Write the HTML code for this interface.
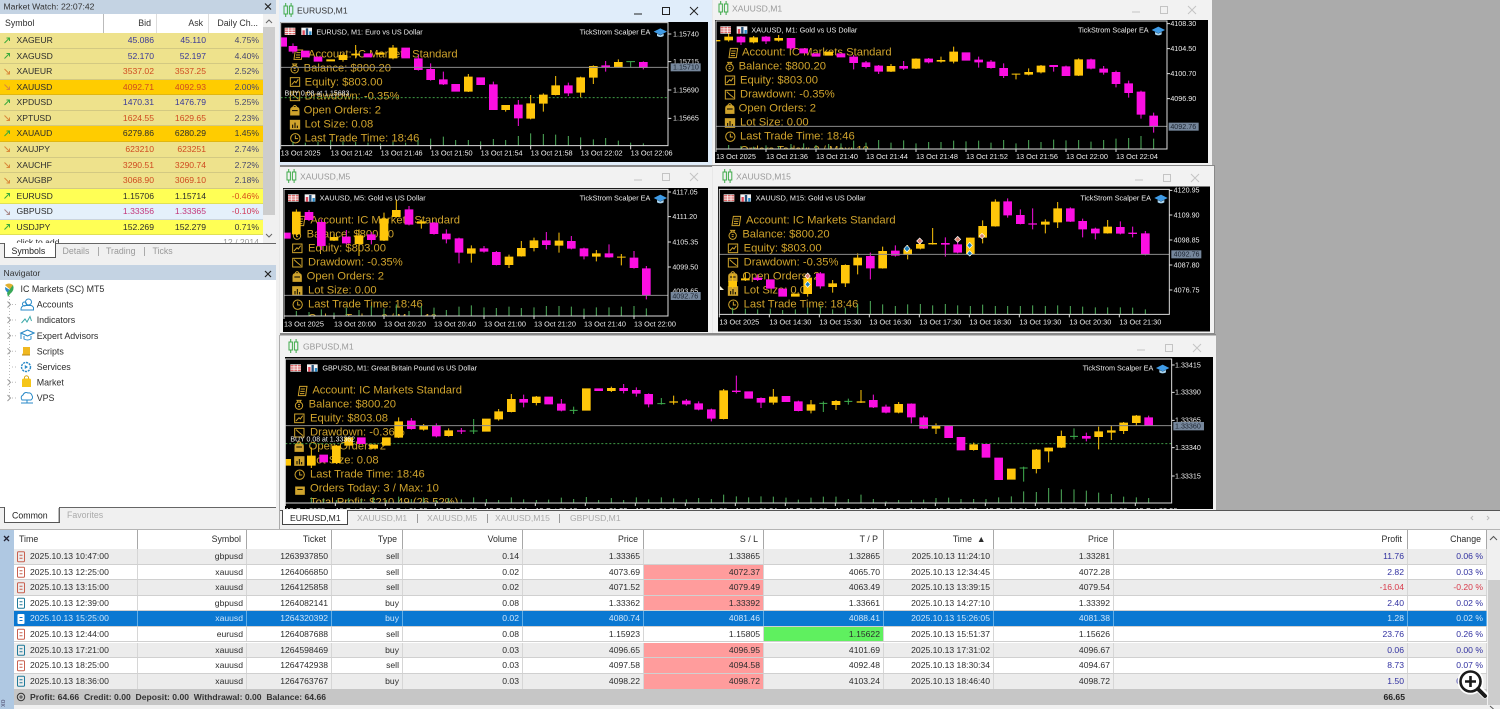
<!DOCTYPE html>
<html><head><meta charset="utf-8"><title>MT5</title>
<style>
html,body{margin:0;padding:0;width:1500px;height:709px;overflow:hidden;background:#ababab;font-family:"Liberation Sans",sans-serif}
svg{position:absolute;left:0;top:0}
.p{position:absolute}
.mb{stroke-width:26;fill:none;stroke:#fb0fe2}.mw{stroke-width:3;fill:none;stroke:#fb0fe2}
.yb{stroke-width:26;fill:none;stroke:#ffc60a}.yw{stroke-width:3;fill:none;stroke:#ffc60a}
.gw{stroke-width:3;fill:none;stroke:#3fb04f}
.v{stroke-width:3;fill:none;stroke:#4fae5b}
.fr{fill:none;stroke:#dcdcdc;stroke-width:3}
.tk{fill:none;stroke:#ddd;stroke-width:3}
.pl{stroke:#8a8a8a;stroke-width:3;fill:none}
.dl{stroke:#3f9a46;stroke-width:3;stroke-dasharray:6 6;fill:none}
.ax{font:22px "Liberation Sans",sans-serif;fill:#eee}
.pr{font:21.5px "Liberation Sans",sans-serif;fill:#eee}
.tl{font:21.8px "Liberation Sans",sans-serif;fill:#eee}
.hd{font:33.7px "Liberation Sans",sans-serif;fill:#cfa32c}
.ttl{font:8.6px "Liberation Sans",sans-serif}
.mw2{position:absolute;left:0;top:14px;width:263px}
.r{display:grid;grid-template-columns:104px 53px 52px 54px;height:15.57px;line-height:15px;font-size:8.6px;color:#2c2c2c;box-sizing:border-box;border-bottom:1px solid rgba(90,90,90,.18)}
.r span{text-align:right;padding-right:3px;white-space:nowrap;overflow:hidden}
.r span:first-child{text-align:left;padding-left:16.5px;color:#2c2c2c}
.k{background:#eee28c}.o{background:#ffcc00}.l{background:#ffff55}.b{background:#e4f0fb}
.up span{color:#38389a}.dn span{color:#cf4a20}
.r span:last-child{color:#48486e;padding-right:4px}
.dk span{color:#2c2c2c}.dk span:last-child{color:#3a3a3a}
.t{position:absolute;left:14px;display:grid;grid-template-columns:124px 109px 85px 71px 120px 121px 120px 120px 110px 120px 294px 79px;width:1473px;font-size:8.6px;color:#2c2c2c;box-sizing:border-box;height:15.58px;line-height:15px;border-bottom:1px solid #d0d0d0}
.t span{text-align:right;padding-right:3px;border-right:1px solid #d6d6d6;white-space:nowrap;overflow:hidden}
.t span:first-child{text-align:left;padding-left:16px}
.t.h{height:20px;line-height:19px;background:#fff;border:0;font-size:8.8px}
.t.h span{border-right:1px solid #a8a8a8;padding-right:5px}
.t.h span:first-child{padding-left:5px}
.e{background:#ececec}.w{background:#fff}
.s{background:#0a78d2;color:#d0e6fa}.s span{border-right-color:#63aee6}
.sl{background:#ff9c9c}.tp{background:#5ff05f}
.pf{color:#3030a0}.ls{color:#d83a4a}
</style></head><body>

<svg width="1500" height="709" viewBox="0 0 1500 709">
<defs>
<g id="hud" fill="none" stroke="#cfa32c" stroke-width="3">
<path d="M52 150H74L70 178H48ZM55 158H68M54 165H67M53 172H66"/>
<circle cx="50" cy="208" r="11"/><path d="M44 192H56L53 197H47Z"/><path d="M47 205H53M47 211H53"/>
<rect x="37" y="233" width="28" height="26"/><path d="M41 254L50 244L54 248L61 238"/>
<rect x="37" y="276" width="28" height="26"/><path d="M41 280L52 290L62 298"/>
<path d="M44 322Q50 310 57 322" /><path fill="#cfa32c" d="M38 345V330Q38 322 46 322H55Q63 322 63 330V345Z"/><path stroke="#000" d="M42 332H59"/>
<rect x="37" y="361" width="28" height="26" fill="#cfa32c"/><path stroke="#000" d="M44 384V374M51 384V368M58 384V377"/>
<circle cx="52" cy="415" r="14"/><path d="M52 406V416H60"/>
<rect x="40" y="452" width="26" height="22" fill="#cfa32c"/><path stroke="#000" d="M45 459H61"/>
</g>
<g id="ti"><rect width="32" height="22" fill="#f3f3f3"/><path d="M0 4H32M0 11H32M0 18H32" stroke="#e06a6a" stroke-width="4"/><path d="M11 0V22M22 0V22" stroke="#fff" stroke-width="2"/></g>
<g id="ci"><rect width="32" height="22" fill="#f5f5f5"/><path d="M7 22V8" stroke="#e04a5a" stroke-width="7"/><path d="M17 22V2" stroke="#24507a" stroke-width="7"/><path d="M27 22V11" stroke="#2a8ac8" stroke-width="7"/></g>
<g id="hat"><path d="M-20 0L0-10L20 0L0 10Z" fill="#3f9be6"/><path d="M-10 6V13Q0 19 10 13V6L0 11Z" fill="#a8d4f0"/></g>
<g id="wi" fill="none"><rect x="-4" y="-4" width="3.4" height="8"/><rect x="1.4" y="-4" width="3.4" height="8"/><path d="M-2.3 -7V-4M-2.3 4V7M3.1 -7V-4M3.1 4V7"/></g>
<clipPath id="c1"><rect x="8" y="68" width="1162" height="369"/></clipPath>
<clipPath id="c2"><rect x="12" y="63" width="1353" height="384"/></clipPath>
<clipPath id="c3"><rect x="18" y="70" width="1152" height="380"/></clipPath>
<clipPath id="c4"><rect x="22" y="70" width="1350" height="375"/></clipPath>
<clipPath id="c5"><rect x="22" y="75" width="2659" height="432"/></clipPath>
</defs>

<rect x="279" y="0" width="436" height="335" fill="#e8e8e8"/>
<path d="M280 165.5H714M280 334.5H1216" stroke="#888"/>

<!-- EURUSD M1 -->
<rect x="279" y="0" width="433" height="165" fill="#e0edfa"/>
<rect x="280" y="22" width="428" height="140" fill="#000"/>
<g transform="translate(278,0) scale(.33333)">
<g clip-path="url(#c1)">
<use href="#hud"/>
<text class="hd" x="90" y="172">Account: IC Markets Standard</text>
<text class="hd" x="77" y="214">Balance: $800.20</text>
<text class="hd" x="80" y="256">Equity: $803.00</text>
<text class="hd" x="80" y="298">Drawdown: -0.35%</text>
<text class="hd" x="77" y="340">Open Orders: 2</text>
<text class="hd" x="80" y="382">Lot Size: 0.08</text>
<text class="hd" x="80" y="424">Last Trade Time: 18:46</text>
<path class="dl" d="M8 293H1170"/>
<path class="v" d="M45 437V425M82 437V428M120 437V425M158 437V420M195 437V424M233 437V426M270 437V428M307 437V430M345 437V426M383 437V428M420 437V420M458 437V416M496 437V410M533 437V420M571 437V420M608 437V424M646 437V417M683 437V420M721 437V408M758 437V400M796 437V402M833 437V404M871 437V408M908 437V412M946 437V418M983 437V414M1021 437V422M1058 437V428M1096 437V430"/>
<path class="mw" d="M45 130V160M421 165V212M458 190V242M496 215V255M646 245V330M721 300V378M871 248V288M983 183V215M1096 184V208"/>
<path class="mb" d="M14 112V140M45 138V155M82 152V172M120 170V185M270 160V172M383 143V175M421 175V210M458 207V240M496 238V253M533 252V275M608 232V255M646 253V330M721 314V355M871 256V280M983 196V203M1096 186V204"/>
<path class="yw" d="M195 160V185M233 135V175M345 135V178M571 222V276M683 315V335M758 285V358M796 280V335M833 228V286M908 230V292M946 196V252M1021 178V203"/>
<path class="yb" d="M158 178V184M195 165V180M233 161V166M307 158V164M345 143V175M571 230V275M683 315V330M758 310V356M796 284V311M833 256V285M908 232V278M946 198V233M1021 186V202"/>
<path class="gw" d="M1058 184V203M1045 185H1071"/>
<path class="pl" d="M8 202H1170"/>
<text x="20" y="287" style="font:21px 'Liberation Sans',sans-serif;fill:#eee">BUY 0.08 at 1.15683</text>
</g>
<path class="fr" d="M8 68V437H1170V68Z"/>
<path class="tk" d="M8 437V448M158 437V448M308 437V448M458 437V448M608 437V448M758 437V448M908 437V448M1058 437V448M1170 102H1180M1170 185H1180M1170 270H1180M1170 355H1180"/>
<use href="#ti" x="20" y="83"/><use href="#ci" x="70" y="83"/>
<text class="tl" x="115" y="103">EURUSD, M1:  Euro vs US Dollar</text>
<text class="tl" x="905" y="103">TickStrom Scalper EA</text><use href="#hat" x="1147" y="95"/>
<text class="pr" x="1185" y="109">1.15740</text><text class="pr" x="1185" y="192">1.15715</text><text class="pr" x="1185" y="277">1.15690</text><text class="pr" x="1185" y="362">1.15665</text>
<rect x="1178" y="190" width="90" height="24" fill="#76879c"/><text class="pr" x="1185" y="209" style="fill:#1c2430">1.15710</text>
<text class="ax" x="8" y="467">13 Oct 2025</text><text class="ax" x="158" y="467">13 Oct 21:42</text><text class="ax" x="308" y="467">13 Oct 21:46</text><text class="ax" x="458" y="467">13 Oct 21:50</text><text class="ax" x="608" y="467">13 Oct 21:54</text><text class="ax" x="758" y="467">13 Oct 21:58</text><text class="ax" x="908" y="467">13 Oct 22:02</text><text class="ax" x="1058" y="467">13 Oct 22:06</text>
</g>

<!-- XAUUSD M1 -->
<rect x="713" y="0" width="499" height="165" fill="#f2f2f2"/>
<rect x="715" y="20" width="493" height="143" fill="#000"/>
<g transform="translate(712,0) scale(.33333)">
<g clip-path="url(#c2)">
<g transform="translate(3,-5)">
<use href="#hud"/>
<text class="hd" x="87" y="172">Account: IC Markets Standard</text>
<text class="hd" x="77" y="214">Balance: $800.20</text>
<text class="hd" x="81" y="256">Equity: $803.00</text>
<text class="hd" x="81" y="298">Drawdown: -0.35%</text>
<text class="hd" x="77" y="340">Open Orders: 2</text>
<text class="hd" x="81" y="382">Lot Size: 0.00</text>
<text class="hd" x="81" y="424">Last Trade Time: 18:46</text>
<text class="hd" x="81" y="466">Orders Today: 3 / Max: 10</text>
</g>
<path class="v" d="M50 447V435M87 447V438M125 447V440M162 447V436M200 447V438M237 447V432M275 447V430M312 447V435M350 447V432M387 447V430M425 447V422M462 447V428M500 447V420M537 447V428M575 447V421M612 447V430M650 447V426M687 447V426M725 447V422M762 447V424M800 447V422M837 447V428M875 447V420M912 447V430M950 447V420M987 447V426M1025 447V419M1062 447V421M1100 447V420M1137 447V425M1175 447V420M1212 447V416M1250 447V414M1287 447V408M1325 447V416"/>
<path class="mw" d="M87 108V135M162 108V132M237 114V150M425 165V208M462 183V205M500 195V222M575 183V210M650 174V190M800 170V203M837 180V206M875 190V234M1025 195V215M1062 197V228M1137 176V208M1175 198V224M1212 212V262M1250 242V293M1287 272V356M1325 338V398"/>
<path class="mb" d="M87 110V127M162 110V124M237 114V145M275 145V160M312 160V170M387 160V172M425 170V189M462 187V201M500 197V215M575 198V206M650 176V187M762 157V182M800 179V187M837 185V204M875 204V228M1025 195V201M1062 199V228M1137 178V206M1175 206V218M1212 216V252M1250 250V279M1287 275V344M1325 347V381"/>
<path class="yw" d="M50 100V125M125 108V130M200 105V125M537 192V216M612 175V207M687 170V188M725 140V190M912 221V238M950 205V226M987 195V220M1100 175V228"/>
<path class="yb" d="M12 120V124M50 110V121M125 112V127M200 114V122M350 155V167M537 198V215M612 176V206M687 180V185M725 155V185M912 221V224M950 216V224M987 197V217M1100 178V227"/>
<path class="pl" d="M12 379H1365"/>
</g>
<path class="fr" d="M12 63V447H1365V63Z"/>
<path class="tk" d="M12 447V456M162 447V456M312 447V456M462 447V456M612 447V456M762 447V456M912 447V456M1062 447V456M1212 447V456M1365 71H1374M1365 146H1374M1365 221H1374M1365 296H1374"/>
<use href="#ti" x="25" y="79"/><use href="#ci" x="74" y="79"/>
<text class="tl" x="118" y="98">XAUUSD, M1:  Gold vs US Dollar</text>
<text class="tl" x="1098" y="98">TickStrom Scalper EA</text><use href="#hat" x="1339" y="90"/>
<text class="pr" x="1375" y="78">4108.30</text><text class="pr" x="1375" y="153">4104.50</text><text class="pr" x="1375" y="228">4100.70</text><text class="pr" x="1375" y="303">4096.90</text>
<rect x="1370" y="368" width="90" height="24" fill="#76879c"/><text class="pr" x="1375" y="387" style="fill:#1c2430">4092.76</text>
<text class="ax" x="12" y="477">13 Oct 2025</text><text class="ax" x="162" y="477">13 Oct 21:36</text><text class="ax" x="312" y="477">13 Oct 21:40</text><text class="ax" x="462" y="477">13 Oct 21:44</text><text class="ax" x="612" y="477">13 Oct 21:48</text><text class="ax" x="762" y="477">13 Oct 21:52</text><text class="ax" x="912" y="477">13 Oct 21:56</text><text class="ax" x="1062" y="477">13 Oct 22:00</text><text class="ax" x="1212" y="477">13 Oct 22:04</text>
</g>

<!-- XAUUSD M5 -->
<rect x="280" y="166" width="432" height="168" fill="#f2f2f2"/>
<rect x="283" y="188" width="425" height="144" fill="#000"/>
<g transform="translate(278,166) scale(.33333)">
<g clip-path="url(#c3)">
<g transform="translate(7,1)">
<use href="#hud"/>
<text class="hd" x="90" y="172">Account: IC Markets Standard</text>
<text class="hd" x="79" y="214">Balance: $800.20</text>
<text class="hd" x="83" y="256">Equity: $803.00</text>
<text class="hd" x="83" y="298">Drawdown: -0.35%</text>
<text class="hd" x="79" y="340">Open Orders: 2</text>
<text class="hd" x="83" y="382">Lot Size: 0.00</text>
<text class="hd" x="83" y="424">Last Trade Time: 18:46</text>
<text class="hd" x="83" y="466">Orders Today: 3 / Max: 10</text>
</g>
<path class="v" d="M55 450V435M93 450V438M130 450V430M168 450V440M205 450V425M243 450V432M280 450V420M318 450V428M355 450V415M393 450V435M430 450V420M468 450V425M505 450V432M543 450V422M580 450V418M618 450V424M655 450V426M693 450V422M730 450V426M768 450V424M805 450V420M843 450V420M880 450V422M918 450V428M955 450V424M993 450V424M1030 450V422M1068 450V420M1105 450V427"/>
<path class="mw" d="M93 132V165M130 160V252M205 192V235M280 198V235M393 120V178M468 168V206M505 190V232M543 215V292M618 240V260M655 255V298M805 198V250M880 210V250M918 245V280M993 235V275M1068 255V308M1105 300V400"/>
<path class="mb" d="M25 200V218M93 138V162M130 168V240M205 212V232M280 205V222M393 130V176M468 170V204M505 203V220M543 217V260M618 247V257M655 258V297M805 223V237M880 225V248M918 247V271M993 262V274M1068 275V306M1105 307V388"/>
<path class="yw" d="M55 130V210M168 205V225M243 190V270M318 140V225M355 100V155M430 160V188M580 238V290M693 266V306M730 225V272M768 215V256M843 200V260M955 252V286M1030 264V298"/>
<path class="yb" d="M55 137V205M168 213V224M243 208V234M318 158V224M355 132V153M430 166V173M580 247V263M693 272V297M730 246V271M768 223V246M843 224V239M955 262V272M1030 272V275"/>
<path class="pl" d="M18 388H1170"/>
</g>
<path class="fr" d="M18 70V450H1170V70Z"/>
<path class="tk" d="M18 450V459M168 450V459M318 450V459M468 450V459M618 450V459M768 450V459M918 450V459M1068 450V459M1170 78H1179M1170 152H1179M1170 228H1179M1170 303H1179"/>
<use href="#ti" x="30" y="85"/><use href="#ci" x="80" y="85"/>
<text class="tl" x="125" y="104">XAUUSD, M5:  Gold vs US Dollar</text>
<text class="tl" x="905" y="104">TickStrom Scalper EA</text><use href="#hat" x="1147" y="96"/>
<text class="pr" x="1183" y="85">4117.05</text><text class="pr" x="1183" y="159">4111.20</text><text class="pr" x="1183" y="235">4105.35</text><text class="pr" x="1183" y="310">4099.50</text><text class="pr" x="1183" y="382">4093.65</text>
<rect x="1178" y="378" width="90" height="24" fill="#76879c"/><text class="pr" x="1183" y="397" style="fill:#1c2430">4092.76</text>
<text class="ax" x="18" y="481">13 Oct 2025</text><text class="ax" x="168" y="481">13 Oct 20:00</text><text class="ax" x="318" y="481">13 Oct 20:20</text><text class="ax" x="468" y="481">13 Oct 20:40</text><text class="ax" x="618" y="481">13 Oct 21:00</text><text class="ax" x="768" y="481">13 Oct 21:20</text><text class="ax" x="918" y="481">13 Oct 21:40</text><text class="ax" x="1068" y="481">13 Oct 22:00</text>
</g>

<!-- XAUUSD M15 -->
<rect x="713" y="165" width="501" height="169" fill="#f2f2f2"/>
<rect x="718" y="186.5" width="492" height="145" fill="#000"/>
<g transform="translate(712,166) scale(.33333)">
<g clip-path="url(#c4)">
<g transform="translate(12,1)">
<use href="#hud"/>
<text class="hd" x="90" y="172">Account: IC Markets Standard</text>
<text class="hd" x="79" y="214">Balance: $800.20</text>
<text class="hd" x="83" y="256">Equity: $803.00</text>
<text class="hd" x="83" y="298">Drawdown: -0.35%</text>
<text class="hd" x="79" y="340">Open Orders: 2</text>
<text class="hd" x="83" y="382">Lot Size: 0.00</text>
<text class="hd" x="83" y="424">Last Trade Time: 18:46</text>
</g>
<path class="v" d="M62 445V425M100 445V428M137 445V430M175 445V428M212 445V432M250 445V430M287 445V425M325 445V420M362 445V430M400 445V425M437 445V415M475 445V405M512 445V415M550 445V420M587 445V415M625 445V414M662 445V418M700 445V414M737 445V418M775 445V420M812 445V416M850 445V420M887 445V420M925 445V420M962 445V418M1000 445V420M1037 445V418M1075 445V420M1112 445V422M1150 445V424M1187 445V424M1225 445V424M1262 445V425M1300 445V430"/>
<path class="mw" d="M137 325V345M325 318V368M475 260V340M550 238V272M700 214V272M737 225V262M887 97V155M925 130V175M962 127V190M1075 124V168M1112 158V214M1150 185V220M1225 166V205M1262 182V214M1300 195V268"/>
<path class="mb" d="M137 335V342M175 340V368M212 368V392M325 322V361M475 270V307M550 254V269M700 231V236M737 235V260M887 106V148M925 147V174M962 172V176M1075 127V167M1112 165V190M1150 188V202M1225 183V203M1262 200V204M1300 202V266"/>
<path class="yw" d="M62 325V368M100 320V345M287 322V392M362 342V380M400 295V363M437 262V325M512 242V308M587 237V280M625 218V250M662 186V236M775 215V270M812 163V232M850 100V182M1000 160V202M1037 108V186M1187 162V203"/>
<path class="yb" d="M62 345V363M100 337V343M250 383V392M287 335V384M362 352V363M400 297V352M437 275V298M512 255V307M587 250V267M625 234V248M662 231V235M775 215V265M812 180V215M850 107V181M1000 167V176M1037 127V169M1187 182V202"/>
<path class="pl" d="M22 265H1372"/>
<g stroke="#fff" stroke-width="2">
<path fill="#d9806e" d="M623 216L632 225L623 234L614 225Z"/><path fill="#d9806e" d="M737 211L746 220L737 229L728 220Z"/><path fill="#d9806e" d="M810 202L818 210L810 218L802 210Z"/><path fill="#d9806e" d="M287 321L295 330L287 339L279 330Z"/>
<path fill="#1f7fb8" d="M585 238L594 248L585 258L576 248Z"/><path fill="#1f7fb8" d="M773 229L781 238L773 247L765 238Z"/><path fill="#1f7fb8" d="M773 254L781 262L773 270L765 262Z"/><path fill="#1f7fb8" d="M287 346L295 355L287 364L279 355Z"/>
</g>
<path d="M24 360L36 372H24Z" fill="#f5f0d8"/>
</g>
<path class="fr" d="M22 70V445H1372V70Z"/>
<path class="tk" d="M22 445V454M172 445V454M322 445V454M472 445V454M622 445V454M772 445V454M922 445V454M1072 445V454M1222 445V454M1372 73H1381M1372 147H1381M1372 222H1381M1372 297H1381M1372 372H1381"/>
<use href="#ti" x="35" y="85"/><use href="#ci" x="85" y="85"/>
<text class="tl" x="131" y="104">XAUUSD, M15:  Gold vs US Dollar</text>
<text class="tl" x="1105" y="104">TickStrom Scalper EA</text><use href="#hat" x="1347" y="96"/>
<text class="pr" x="1385" y="80">4120.95</text><text class="pr" x="1385" y="154">4109.90</text><text class="pr" x="1385" y="229">4098.85</text><text class="pr" x="1385" y="304">4087.80</text><text class="pr" x="1385" y="379">4076.75</text>
<rect x="1378" y="253" width="90" height="24" fill="#76879c"/><text class="pr" x="1385" y="272" style="fill:#1c2430">4092.76</text>
<text class="ax" x="22" y="476">13 Oct 2025</text><text class="ax" x="172" y="476">13 Oct 14:30</text><text class="ax" x="322" y="476">13 Oct 15:30</text><text class="ax" x="472" y="476">13 Oct 16:30</text><text class="ax" x="622" y="476">13 Oct 17:30</text><text class="ax" x="772" y="476">13 Oct 18:30</text><text class="ax" x="922" y="476">13 Oct 19:30</text><text class="ax" x="1072" y="476">13 Oct 20:30</text><text class="ax" x="1222" y="476">13 Oct 21:30</text>
</g>

<!-- GBPUSD M1 -->
<rect x="280" y="335" width="936" height="175" fill="#f2f2f2"/>
<rect x="285" y="357" width="928" height="152" fill="#000"/>
<g transform="translate(278,334) scale(.33333)">
<g clip-path="url(#c5)">
<g transform="translate(13,7)">
<use href="#hud"/>
<text class="hd" x="90" y="172">Account: IC Markets Standard</text>
<text class="hd" x="79" y="214">Balance: $800.20</text>
<text class="hd" x="83" y="256">Equity: $803.08</text>
<text class="hd" x="83" y="298">Drawdown: -0.36%</text>
<text class="hd" x="79" y="340">Open Orders: 2</text>
<text class="hd" x="83" y="382">Lot Size: 0.08</text>
<text class="hd" x="83" y="424">Last Trade Time: 18:46</text>
<text class="hd" x="83" y="466">Orders Today: 3 / Max: 10</text>
<text class="hd" x="83" y="508">Total Profit: $210.49 (26.52%)</text>
</g>
<path class="dl" d="M22 329H2681"/>
<path class="v" d="M100 507V490M137 507V494M175 507V498M212 507V492M250 507V495M287 507V490M325 507V498M362 507V488M400 507V495M437 507V490M475 507V498M512 507V492M550 507V496M587 507V490M625 507V495M662 507V498M700 507V490M737 507V496M775 507V498M812 507V497M850 507V491M887 507V495M925 507V489M962 507V498M1000 507V492M1037 507V498M1075 507V490M1112 507V496M1150 507V490M1187 507V493M1225 507V496M1262 507V492M1300 507V495M1337 507V482M1375 507V487M1412 507V490M1449 507V487M1486 507V488M1524 507V491M1561 507V497M1599 507V491M1636 507V488M1674 507V488M1711 507V495M1749 507V482M1786 507V495M1824 507V502M1862 507V498M1900 507V498M1937 507V497M1974 507V492M2012 507V491M2049 507V495M2087 507V495M2124 507V495M2162 507V490M2200 507V487M2237 507V472M2275 507V474M2312 507V462M2350 507V466M2388 507V466M2425 507V470M2462 507V476M2500 507V480M2537 507V488M2575 507V490M2612 507V492"/>
<path class="mw" d="M400 252V287M475 268V310M550 282V300M737 182V220M850 195V232M1037 150V178M1075 160V188M1112 178V220M1225 195V215M1262 202V229M1300 224V262M1375 125V178M1449 190V222M1561 200V232M1786 182V222M1824 212V238M1900 208V268M1937 245V285M2425 296V322M2612 245V276"/>
<path class="mb" d="M137 362V385M250 310V330M400 260V285M475 276V307M550 289V293M737 195V206M812 188V211M850 209V230M962 163V171M1037 162V171M1075 168V179M1112 180V211M1225 200V211M1262 208V227M1300 226V254M1375 170V174M1412 172V194M1449 192V206M1524 186V204M1561 202V231M1786 198V220M1824 218V236M1900 209V250M1937 250V284M2012 276V312M2049 309V349M2124 330V371M2162 371V438M2425 306V314M2612 250V275"/>
<path class="yw" d="M100 340V402M175 333V390M362 250V312M437 270V290M512 283V308M662 225V260M700 180V235M775 186V214M1000 158V174M1187 185V212M1337 165V256M1486 165V212M1599 198V238M1674 198V228M1749 168V207M1862 204V238M1974 268V300M2087 326V350M2275 345V418M2312 341V385M2350 290V342M2462 278V346M2500 275V318M2537 264V300M2575 243V275"/>
<path class="yb" d="M26 375V395M100 365V395M175 335V387M212 310V335M287 332V344M325 310V335M362 262V311M437 276V287M512 289V306M625 254V293M662 232V256M700 195V234M775 188V207M925 163V230M1000 162V171M1187 202V206M1337 169V255M1486 188V206M1599 211V230M1674 201V213M1749 202V206M1862 210V236M1974 276V284M2087 331V348M2200 404V437M2275 347V405M2312 341V352M2350 306V341M2462 292V309M2500 289V296M2537 266V291M2575 245V267"/>
<path class="gw" d="M587 255V300M575 291H599M887 218V240M875 229H899M1150 192V212M1138 209H1162M1636 202V234M1624 208H1648M1711 194V212M1699 202H1723M2237 398V443M2225 402H2249M2388 283V316M2376 307H2400"/>
<path class="pl" d="M22 275H2681"/>
<text x="37" y="323" style="font:21px 'Liberation Sans',sans-serif;fill:#eee">BUY 0.08 at 1.33362</text>
</g>
<path class="fr" d="M22 75V507H2681V75Z"/>
<path class="tk" d="M22 507V516M172 507V516M322 507V516M472 507V516M622 507V516M772 507V516M922 507V516M1072 507V516M1222 507V516M1372 507V516M1522 507V516M1672 507V516M1822 507V516M1972 507V516M2122 507V516M2272 507V516M2422 507V516M2572 507V516M2681 93H2690M2681 175H2690M2681 259H2690M2681 341H2690M2681 426H2690"/>
<use href="#ti" x="37" y="91"/><use href="#ci" x="87" y="91"/>
<text class="tl" x="133" y="110">GBPUSD, M1:  Great Britain Pound vs US Dollar</text>
<text class="tl" x="2414" y="110">TickStrom Scalper EA</text><use href="#hat" x="2654" y="102"/>
<text class="pr" x="2691" y="100">1.33415</text><text class="pr" x="2691" y="182">1.33390</text><text class="pr" x="2691" y="266">1.33365</text><text class="pr" x="2691" y="348">1.33340</text><text class="pr" x="2691" y="433">1.33315</text>
<rect x="2686" y="264" width="92" height="25" fill="#76879c"/><text class="pr" x="2691" y="284" style="fill:#1c2430">1.33360</text>
<text class="ax" x="22" y="537">13 Oct 2025</text><text class="ax" x="172" y="537">13 Oct 21:02</text><text class="ax" x="322" y="537">13 Oct 21:06</text><text class="ax" x="472" y="537">13 Oct 21:10</text><text class="ax" x="622" y="537">13 Oct 21:14</text><text class="ax" x="772" y="537">13 Oct 21:18</text><text class="ax" x="922" y="537">13 Oct 21:22</text><text class="ax" x="1072" y="537">13 Oct 21:26</text><text class="ax" x="1222" y="537">13 Oct 21:30</text><text class="ax" x="1372" y="537">13 Oct 21:34</text><text class="ax" x="1522" y="537">13 Oct 21:38</text><text class="ax" x="1672" y="537">13 Oct 21:42</text><text class="ax" x="1822" y="537">13 Oct 21:46</text><text class="ax" x="1972" y="537">13 Oct 21:50</text><text class="ax" x="2122" y="537">13 Oct 21:54</text><text class="ax" x="2272" y="537">13 Oct 21:58</text><text class="ax" x="2422" y="537">13 Oct 22:02</text><text class="ax" x="2572" y="537">13 Oct 22:06</text>
</g>

<!-- window titles -->
<text class="ttl" x="297" y="13.5" fill="#333">EURUSD,M1</text>
<text class="ttl" x="732" y="11.5" fill="#999">XAUUSD,M1</text>
<text class="ttl" x="300" y="179.5" fill="#999">XAUUSD,M5</text>
<text class="ttl" x="736" y="179.5" fill="#999">XAUUSD,M15</text>
<text class="ttl" x="303" y="349.5" fill="#999">GBPUSD,M1</text>
<g stroke="#3faa4a" stroke-width="1"><use href="#wi" x="288" y="10"/><use href="#wi" x="723" y="8"/><use href="#wi" x="291" y="176"/><use href="#wi" x="727" y="176"/><use href="#wi" x="293" y="346"/></g>
<g fill="none" stroke="#222" stroke-width="1"><path d="M634 14H642"/><rect x="662.5" y="7.5" width="7" height="7"/><path d="M690 7L698 15M698 7L690 15"/></g>
<g fill="none" stroke="#c4c4c4" stroke-width="1">
<path d="M1132 12H1140"/><rect x="1160.5" y="6.5" width="7" height="7"/><path d="M1188 6L1196 14M1196 6L1188 14"/>
<path d="M634 180H642"/><rect x="662.5" y="173.5" width="7" height="7"/><path d="M690 173L698 181M698 173L690 181"/>
<path d="M1135 180H1143"/><rect x="1163.5" y="174.5" width="7" height="7"/><path d="M1191 174L1199 182M1199 174L1191 182"/>
<path d="M1137 350H1145"/><rect x="1165.5" y="344.5" width="7" height="7"/><path d="M1193 344L1201 352M1201 344L1193 352"/>
</g>
<path d="M713 165.5H1214.5V333.5H280M280 166.5H712M280 335H1216" fill="none" stroke="#888"/>
</svg>

<!-- left panel bg -->
<div class="p" style="left:0;top:0;width:279px;height:530px;background:#f0f0f0"></div>
<div class="p" style="left:0;top:0;width:276px;height:13.5px;background:#c4d3e3"></div>
<div class="p" style="left:0;top:14px;width:263px;height:229px;background:#fff"></div>
<div class="p" style="left:263px;top:27px;width:12px;height:188px;background:#cdcdcd"></div>
<div class="p" style="left:0;top:265px;width:276px;height:15px;background:#c4d3e3"></div>
<div class="p" style="left:0;top:280px;width:276px;height:227px;background:#fff"></div>
<div class="p" style="left:0;top:243px;width:276px;height:1px;background:#666"></div>
<div class="p" style="left:4px;top:243px;width:50px;height:14px;background:#fff;border:1px solid #555;border-top:0"></div>
<div class="p" style="left:0;top:507px;width:276px;height:1px;background:#666"></div>
<div class="p" style="left:4px;top:507px;width:54px;height:15px;background:#fff;border:1px solid #555;border-top:0"></div>

<div class="mw2">
<div class="r" style="height:19px;line-height:19px;background:#fff;font-size:8.8px;border-bottom:0;color:#333"><span style="padding-left:5px;border-right:1px solid #bbb">Symbol</span><span style="border-right:1px solid #ddd;padding-right:5px;color:#333">Bid</span><span style="border-right:1px solid #ddd;padding-right:5px;color:#333">Ask</span><span style="color:#333;padding-right:5px">Daily Ch...</span></div>
<div class="r k up"><span>XAGEUR</span><span>45.086</span><span>45.110</span><span>4.75%</span></div>
<div class="r k up"><span>XAGUSD</span><span>52.170</span><span>52.197</span><span>4.40%</span></div>
<div class="r k dn"><span>XAUEUR</span><span>3537.02</span><span>3537.25</span><span>2.52%</span></div>
<div class="r o dn"><span>XAUUSD</span><span>4092.71</span><span>4092.93</span><span>2.00%</span></div>
<div class="r k up"><span>XPDUSD</span><span>1470.31</span><span>1476.79</span><span>5.25%</span></div>
<div class="r k dn"><span>XPTUSD</span><span>1624.55</span><span>1629.65</span><span>2.23%</span></div>
<div class="r o dk"><span>XAUAUD</span><span>6279.86</span><span>6280.29</span><span>1.45%</span></div>
<div class="r k dn"><span>XAUJPY</span><span>623210</span><span>623251</span><span>2.74%</span></div>
<div class="r k dn"><span>XAUCHF</span><span>3290.51</span><span>3290.74</span><span>2.72%</span></div>
<div class="r k dn"><span>XAUGBP</span><span>3068.90</span><span>3069.10</span><span>2.18%</span></div>
<div class="r l dk"><span>EURUSD</span><span>1.15706</span><span>1.15714</span><span style="color:#d8501a">-0.46%</span></div>
<div class="r b" style="color:#c2357a"><span>GBPUSD</span><span>1.33356</span><span>1.33365</span><span style="color:#d03a5a">-0.10%</span></div>
<div class="r l dk"><span>USDJPY</span><span>152.269</span><span>152.279</span><span>0.71%</span></div>
<div class="r" style="background:#fff;height:7.6px;border:0;color:#888;overflow:hidden"><span style="padding-left:16.5px">click to add</span><span></span><span></span><span style="color:#999">12 / 2014</span></div>
</div>

<!-- tab strip + bottom panel -->
<div class="p" style="left:280px;top:510px;width:1220px;height:19px;background:#f0f0f0;border-top:1px solid #555;box-sizing:border-box"></div>
<div class="p" style="left:0;top:529px;width:14px;height:180px;background:#afc8e2"></div>
<div class="p" style="left:14px;top:529px;width:1473px;height:160px;background:#fff"></div>
<div class="p" style="left:0;top:529px;width:1500px;height:1px;background:#b5b5b5"></div>
<div class="p" style="left:14px;top:689px;width:1473px;height:16px;background:#c6c6c6"></div>
<div class="p" style="left:14px;top:705px;width:1486px;height:4px;background:#f0f0f0"></div>
<div class="p" style="left:1487px;top:530px;width:13px;height:179px;background:#f0f0f0"></div>
<div class="p" style="left:1488px;top:580px;width:12px;height:125px;background:#cdcdcd"></div>
<div class="p" style="left:282px;top:510px;width:64px;height:14px;background:#fff;border:1px solid #444;border-top:0"></div>

<div class="t h" style="top:529.5px"><span>Time</span><span>Symbol</span><span>Ticket</span><span>Type</span><span>Volume</span><span>Price</span><span>S / L</span><span>T / P</span><span>Time &nbsp;&#9650;&nbsp;</span><span>Price</span><span>Profit</span><span>Change</span></div>
<div class="t e" style="top:549px"><span>2025.10.13 10:47:00</span><span>gbpusd</span><span>1263937850</span><span>sell</span><span>0.14</span><span>1.33365</span><span>1.33865</span><span>1.32865</span><span>2025.10.13 11:24:10</span><span>1.33281</span><span class="pf">11.76</span><span class="pf">0.06 %</span></div>
<div class="t w" style="top:564.6px"><span>2025.10.13 12:25:00</span><span>xauusd</span><span>1264066850</span><span>sell</span><span>0.02</span><span>4073.69</span><span class="sl">4072.37</span><span>4065.70</span><span>2025.10.13 12:34:45</span><span>4072.28</span><span class="pf">2.82</span><span class="pf">0.03 %</span></div>
<div class="t e" style="top:580.2px"><span>2025.10.13 13:15:00</span><span>xauusd</span><span>1264125858</span><span>sell</span><span>0.02</span><span>4071.52</span><span class="sl">4079.49</span><span>4063.49</span><span>2025.10.13 13:39:15</span><span>4079.54</span><span class="ls">-16.04</span><span class="ls">-0.20 %</span></div>
<div class="t w" style="top:595.7px"><span>2025.10.13 12:39:00</span><span>gbpusd</span><span>1264082141</span><span>buy</span><span>0.08</span><span>1.33362</span><span class="sl">1.33392</span><span>1.33661</span><span>2025.10.13 14:27:10</span><span>1.33392</span><span class="pf">2.40</span><span class="pf">0.02 %</span></div>
<div class="t s" style="top:611.3px"><span>2025.10.13 15:25:00</span><span>xauusd</span><span>1264320392</span><span>buy</span><span>0.02</span><span>4080.74</span><span>4081.46</span><span>4088.41</span><span>2025.10.13 15:26:05</span><span>4081.38</span><span>1.28</span><span>0.02 %</span></div>
<div class="t w" style="top:626.9px"><span>2025.10.13 12:44:00</span><span>eurusd</span><span>1264087688</span><span>sell</span><span>0.08</span><span>1.15923</span><span>1.15805</span><span class="tp">1.15622</span><span>2025.10.13 15:51:37</span><span>1.15626</span><span class="pf">23.76</span><span class="pf">0.26 %</span></div>
<div class="t e" style="top:642.5px"><span>2025.10.13 17:21:00</span><span>xauusd</span><span>1264598469</span><span>buy</span><span>0.03</span><span>4096.65</span><span class="sl">4096.95</span><span>4101.69</span><span>2025.10.13 17:31:02</span><span>4096.67</span><span class="pf">0.06</span><span class="pf">0.00 %</span></div>
<div class="t w" style="top:658px"><span>2025.10.13 18:25:00</span><span>xauusd</span><span>1264742938</span><span>sell</span><span>0.03</span><span>4097.58</span><span class="sl">4094.58</span><span>4092.48</span><span>2025.10.13 18:30:34</span><span>4094.67</span><span class="pf">8.73</span><span class="pf">0.07 %</span></div>
<div class="t e" style="top:673.6px;border-bottom:0"><span>2025.10.13 18:36:00</span><span>xauusd</span><span>1264763767</span><span>buy</span><span>0.03</span><span>4098.22</span><span class="sl">4098.72</span><span>4103.24</span><span>2025.10.13 18:46:40</span><span>4098.72</span><span class="pf">1.50</span><span class="pf">0.04 %</span></div>

<!-- overlay -->
<svg width="1500" height="709" viewBox="0 0 1500 709" style="font-family:'Liberation Sans',sans-serif">
<defs>
<path id="u" d="M-2.5 2.5L2.5-2.5M-.5-2.5H2.5V.5" fill="none" stroke-width="1"/>
<path id="d" d="M-2.5-2.5L2.5 2.5M-.5 2.5H2.5V-.5" fill="none" stroke-width="1"/>
<g id="od" fill="none" stroke-width="1"><rect x="-3.5" y="-5" width="7" height="10" rx="1"/><path d="M-1.5-1.5H1.5M-1.5 1.5H1.5"/></g>
<path id="ch" d="M-1.5-3L1.5 0L-1.5 3" fill="none" stroke="#999" stroke-width="1"/>
</defs>
<text x="3.5" y="9.5" font-size="8.6" fill="#333">Market Watch: 22:07:42</text>
<path d="M265 3.5L271 9.5M271 3.5L265 9.5M265 271L271 277M271 271L265 277" stroke="#222" stroke-width="1.2"/>
<path d="M266 23L269 20L272 23M266 234L269 237L272 234" fill="none" stroke="#666" stroke-width="1"/>
<g stroke="#3aaa3a"><use href="#u" x="7" y="40.5"/><use href="#u" x="7" y="56"/><use href="#u" x="7" y="102.5"/><use href="#u" x="7" y="133.5"/><use href="#u" x="7" y="196"/><use href="#u" x="7" y="227"/></g>
<g stroke="#d98a3a"><use href="#d" x="7" y="71.5"/><use href="#d" x="7" y="87"/><use href="#d" x="7" y="118"/><use href="#d" x="7" y="149"/><use href="#d" x="7" y="165"/><use href="#d" x="7" y="180.5"/></g>
<use href="#d" x="7" y="212" stroke="#aa8a8a"/>
<text x="11.5" y="254" font-size="8.8" fill="#222">Symbols</text>
<text x="62.5" y="254" font-size="8.8" fill="#999">Details</text>
<text x="106" y="254" font-size="8.8" fill="#999">Trading</text>
<text x="152.5" y="254" font-size="8.8" fill="#999">Ticks</text>
<path d="M98.5 247V256M144.5 247V256" stroke="#aaa"/>

<text x="3.5" y="276" font-size="8.6" fill="#333">Navigator</text>
<text x="20.5" y="291.8" font-size="8.9" fill="#2c2c2c">IC Markets (SC) MT5</text>
<text x="36.7" y="307.6" font-size="8.9" fill="#2c2c2c">Accounts</text>
<text x="36.7" y="323.2" font-size="8.9" fill="#2c2c2c">Indicators</text>
<text x="36.7" y="338.8" font-size="8.9" fill="#2c2c2c">Expert Advisors</text>
<text x="36.7" y="354.4" font-size="8.9" fill="#2c2c2c">Scripts</text>
<text x="36.7" y="370" font-size="8.9" fill="#2c2c2c">Services</text>
<text x="36.7" y="385.6" font-size="8.9" fill="#2c2c2c">Market</text>
<text x="36.7" y="401.2" font-size="8.9" fill="#2c2c2c">VPS</text>
<path d="M9.5 296V398" stroke="#bbb" stroke-dasharray="1 2"/>
<path d="M12 304.5H18M12 320H18M12 335.7H18M12 351.3H18M12 367H18M12 382.3H18M12 398H18" stroke="#bbb" stroke-dasharray="1 2"/>
<use href="#ch" x="9" y="304.5"/><use href="#ch" x="9" y="320"/><use href="#ch" x="9" y="335.7"/><use href="#ch" x="9" y="351.3"/><use href="#ch" x="9" y="382.3"/><use href="#ch" x="9" y="398"/>
<path d="M5 285Q9 282 13 285L11 290Q8 288 5 285Z" fill="#e0b030"/><path d="M5 287Q5 292 9 293L10 290Z" fill="#2a8ac8"/><path d="M13 285Q15 290 10 294L8 297L7 293Z" fill="#3aa858"/>
<g fill="none" stroke="#2a8ac8" stroke-width="1"><circle cx="28.5" cy="302" r="3"/><path d="M21 310Q21 305.5 25 305.5H31Q32 305.5 33.5 307.5V310H21Z"/><circle cx="24.5" cy="304" r="2"/></g>
<path d="M21.5 323L25 319L27 322L30 316.5L31.5 321" fill="none" stroke="#3ba8a8" stroke-width="1"/>
<path d="M21 333L27.5 330L34 333L27.5 336Z" fill="none" stroke="#2a8ac8" stroke-width="1.2"/><path d="M24 336V339Q27.5 341 31 339V336M21 333V339" fill="none" stroke="#2a8ac8" stroke-width="1"/>
<path d="M23 347H30V355H22L23 353Z" fill="#f0b820"/><path d="M22 355H30" stroke="#b88a18"/>
<circle cx="26" cy="367" r="4.5" fill="#fff" stroke="#2a8ac8" stroke-width="1.4" stroke-dasharray="2.2 .8"/><path d="M24.8 365L28 367L24.8 369Z" fill="#2a8ac8"/>
<path d="M22 387V380Q22 378.5 24 378.5H29Q31 378.5 31 380V387Z" fill="#f5c518"/><path d="M24.5 378.5V377Q26.5 374.5 28.5 377V378.5" fill="none" stroke="#d8a918"/>
<path d="M22 400H31Q33.5 398 32 395.5Q31 392.5 28 393Q24.5 391.5 23 395Q20 396.5 22 400Z" fill="none" stroke="#2a8ac8" stroke-width="1"/><path d="M21 403H33M27 400V403" stroke="#2a8ac8"/>

<text x="12" y="518.5" font-size="8.8" fill="#222">Common</text>
<text x="67" y="518" font-size="8.8" fill="#aaa">Favorites</text>
<path d="M59 508V522" stroke="#777"/>

<text x="290" y="521" font-size="8.6" fill="#222">EURUSD,M1</text>
<text x="357" y="521" font-size="8.6" fill="#aaa">XAUUSD,M1</text>
<text x="427" y="521" font-size="8.6" fill="#aaa">XAUUSD,M5</text>
<text x="495" y="521" font-size="8.6" fill="#aaa">XAUUSD,M15</text>
<text x="570" y="521" font-size="8.6" fill="#aaa">GBPUSD,M1</text>
<path d="M417.5 514V523M487.5 514V523M559.5 514V523" stroke="#999"/>
<path d="M1473 516L1471 518L1473 520M1487 516L1489 518L1487 520" fill="none" stroke="#bbb"/>

<path d="M4 536L9 541M9 536L4 541" stroke="#223" stroke-width="1.3"/>
<text x="2.5" y="708" font-size="7" fill="#557" transform="rotate(90 6 703)">ox</text>
<path d="M1490 540L1493.5 536.5L1497 540" fill="none" stroke="#555"/>
<path d="M1490 706L1493.5 709" fill="none" stroke="#555"/>

<g stroke="#c8604f"><use href="#od" x="21" y="556.7"/><use href="#od" x="21" y="572.3"/><use href="#od" x="21" y="587.7"/><use href="#od" x="21" y="634.3"/><use href="#od" x="21" y="665.7"/></g>
<g stroke="#1f7a9a"><use href="#od" x="21" y="603.3"/><use href="#od" x="21" y="650.3"/><use href="#od" x="21" y="681.3"/></g>
<rect x="17.5" y="614" width="7" height="10" rx="1" fill="#fff"/><path d="M19.5 617.5H22.5M19.5 620.5H22.5" stroke="#0a78d2"/>

<circle cx="21" cy="697" r="3.7" fill="none" stroke="#333"/><path d="M19 697H23M21 695V699" stroke="#333" stroke-width=".8"/>
<text x="30" y="700" font-size="8.6" font-weight="bold" fill="#333" xml:space="preserve">Profit: 64.66  Credit: 0.00  Deposit: 0.00  Withdrawal: 0.00  Balance: 64.66</text>
<text x="1405" y="700" font-size="8.6" font-weight="bold" fill="#222" text-anchor="end">66.65</text>

<g fill="none"><path d="M1478 688L1485 695" stroke="#fff" stroke-width="7" stroke-linecap="round"/><circle cx="1470.5" cy="681.5" r="10.5" stroke="#fff" stroke-width="5"/><circle cx="1470.5" cy="681.5" r="10" fill="#fff" stroke="#1a1a1a" stroke-width="2.6"/><path d="M1478 689L1485 696" stroke="#1a1a1a" stroke-width="4" stroke-linecap="round"/><path d="M1465 681.5H1476M1470.5 676V687" stroke="#1a1a1a" stroke-width="2.6"/></g>
</svg>
</body></html>
